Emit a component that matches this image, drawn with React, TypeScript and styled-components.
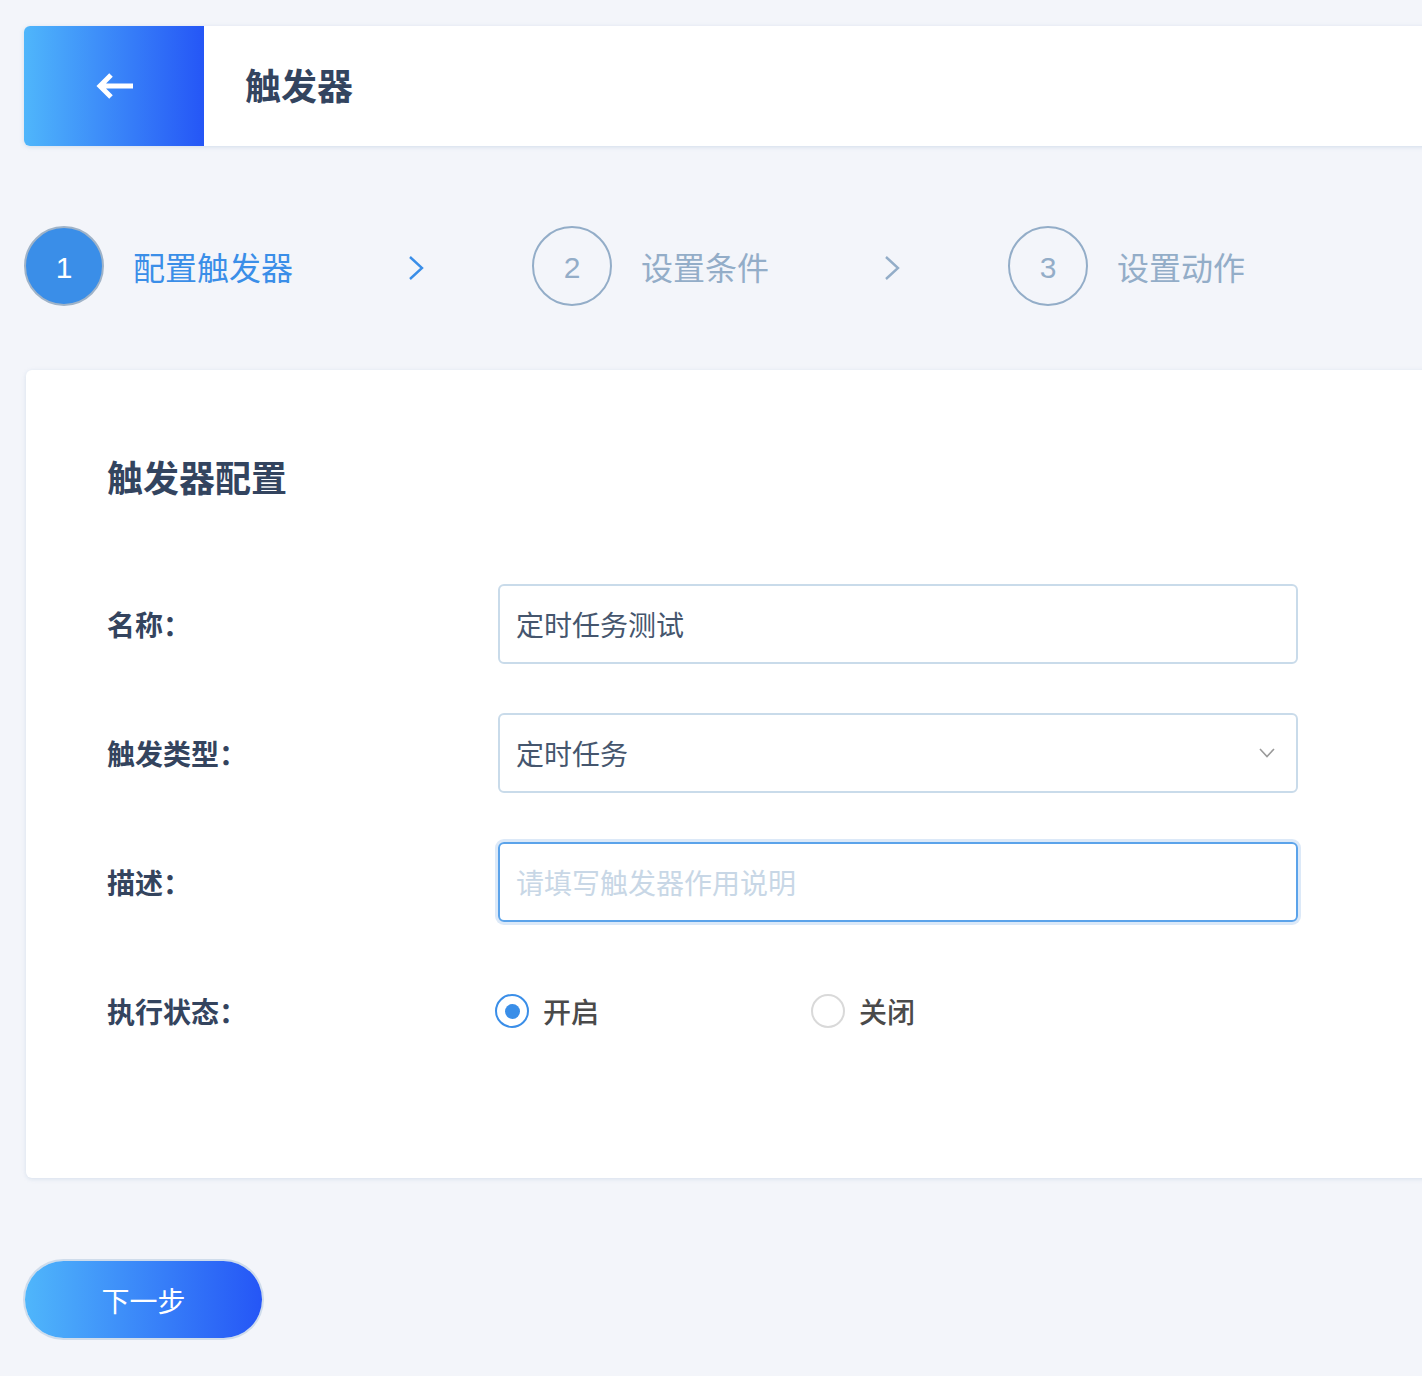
import styled, {createGlobalStyle} from "styled-components";

const GlobalStyle = createGlobalStyle`
  html, body {
    margin: 0;
    padding: 0;
    background: #f3f5fa;
    overflow-x: hidden;
  }
  body {
    font-family: "Liberation Sans", "Noto Sans CJK SC", sans-serif;
  }
`;

const Page = styled.div`
  width: 1460px;
  padding: 26px 0 38px 24px;
  box-sizing: border-box;
`;

const Header = styled.div`
  display: flex;
  height: 120px;
  background: #ffffff;
  border-radius: 6px 0 0 6px;
  box-shadow: 0 1px 4px rgba(150, 175, 205, 0.35);
`;

const BackButton = styled.div`
  width: 180px;
  display: flex;
  align-items: center;
  justify-content: center;
  border-radius: 6px 0 0 6px;
  background: linear-gradient(90deg, #4fb6fb 0%, #2556f6 100%);
`;

const HeaderTitle = styled.h1`
  margin: 0 0 0 41px;
  align-self: center;
  font-size: 36px;
  font-weight: 700;
  color: #33445f;
  line-height: 1;
  padding-top: 4px;
`;

const Steps = styled.div`
  display: flex;
  align-items: center;
  margin-top: 80px;
  height: 80px;
`;

const StepCircle = styled.div<{ $active?: boolean }>`
  width: 80px;
  height: 80px;
  box-sizing: border-box;
  border-radius: 50%;
  border: 2px solid ${p => p.$active ? "#9fb3c8" : "#93adc8"};
  background: ${p => p.$active ? "#3a8ee8" : "transparent"};
  color: ${p => p.$active ? "#ffffff" : "#93adc8"};
  display: flex;
  align-items: center;
  justify-content: center;
  font-size: 30px;
  font-weight: 300;
  padding-top: 3px;
  flex-shrink: 0;
`;

const StepLabel = styled.div<{ $active?: boolean }>`
  margin-left: 29px;
  font-size: 32px;
  color: ${p => p.$active ? "#3a8ee8" : "#93adc8"};
  line-height: 1;
  padding-top: 6px;
`;

const StepArrow = styled.div`
  display: flex;
  margin: 4px 107px 0 114px;
`;

const Card = styled.div`
  margin-top: 64px;
  margin-left: 2px;
  background: #ffffff;
  border-radius: 6px 0 0 6px;
  box-shadow: 0 1px 4px rgba(150, 175, 205, 0.3);
  padding: 92px 0 127px 81px;
`;

const CardTitle = styled.h2`
  margin: 0 0 86px 0;
  font-size: 36px;
  font-weight: 700;
  color: #33445f;
  line-height: 36px;
`;

const FormRow = styled.div`
  display: flex;
  align-items: center;
  height: 80px;
  margin-bottom: 49px;
  &:last-child {
    margin-bottom: 0;
  }
`;

const Label = styled.div`
  width: 391px;
  font-size: 28px;
  font-weight: 700;
  color: #34445e;
  flex-shrink: 0;
`;

const Field = styled.div<{ $focused?: boolean }>`
  width: 800px;
  height: 80px;
  box-sizing: border-box;
  border: 2px solid ${p => p.$focused ? "#5ba3ea" : "#c9dbea"};
  border-radius: 6px;
  box-shadow: ${p => p.$focused ? "0 0 0 3px #dce9f8" : "none"};
  display: flex;
  align-items: center;
  justify-content: space-between;
  padding: 0 20px 0 16px;
`;

const FieldText = styled.span<{ $placeholder?: boolean }>`
  font-size: 28px;
  color: ${p => p.$placeholder ? "#c8d7e6" : "#45566e"};
`;

const RadioGroup = styled.div`
  display: flex;
  margin-left: -3px;
`;

const RadioOption = styled.label`
  width: 316px;
  display: flex;
  align-items: center;
  gap: 14px;
  font-size: 28px;
  font-weight: 500;
  color: #4a4a4a;
`;

const RadioCircle = styled.span<{ $checked?: boolean }>`
  width: 34px;
  height: 34px;
  box-sizing: border-box;
  border-radius: 50%;
  border: 2px solid ${p => p.$checked ? "#3a8ee8" : "#d9d9d9"};
  display: flex;
  align-items: center;
  justify-content: center;
  &::after {
    content: "";
    display: ${p => p.$checked ? "block" : "none"};
    width: 15px;
    height: 15px;
    border-radius: 50%;
    background: #3a8ee8;
  }
`;

const NextButton = styled.button`
  margin-top: 83px;
  margin-left: 1px;
  width: 237px;
  height: 77px;
  border-radius: 39px;
  border: none;
  box-shadow: 0 0 0 2px #cfdceb;
  background: linear-gradient(90deg, #4fb6fb 0%, #2556f6 100%);
  color: #ffffff;
  font-family: "Liberation Sans", "Noto Sans CJK SC", sans-serif;
  font-size: 28px;
  cursor: pointer;
`;

function Chevron({color}: { color: string }) {
    return (
        <svg width="18" height="28" viewBox="0 0 18 28">
            <path d="M3 3 L15 14 L3 25" fill="none" stroke={color} strokeWidth="2.4"/>
        </svg>
    );
}

const steps = [
    {n: 1, label: "配置触发器", active: true},
    {n: 2, label: "设置条件", active: false},
    {n: 3, label: "设置动作", active: false},
];

export default function App() {
    return (
        <Page>
            <GlobalStyle/>
            <Header>
                <BackButton>
                    <svg width="40" height="28" viewBox="0 0 40 28">
                        <path d="M39 14 H6 M17 3 L6 14 L17 25" fill="none" stroke="#ffffff" strokeWidth="5"/>
                    </svg>
                </BackButton>
                <HeaderTitle>触发器</HeaderTitle>
            </Header>

            <Steps>
                {steps.map((s, i) => (
                    <div key={s.n} style={{display: "contents"}}>
                        <StepCircle $active={s.active}>{s.n}</StepCircle>
                        <StepLabel $active={s.active}>{s.label}</StepLabel>
                        {i < steps.length - 1 && (
                            <StepArrow>
                                <Chevron color={s.active ? "#3a8ee8" : "#93adc8"}/>
                            </StepArrow>
                        )}
                    </div>
                ))}
            </Steps>

            <Card>
                <CardTitle>触发器配置</CardTitle>

                <FormRow>
                    <Label>名称：</Label>
                    <Field><FieldText>定时任务测试</FieldText></Field>
                </FormRow>

                <FormRow>
                    <Label>触发类型：</Label>
                    <Field>
                        <FieldText>定时任务</FieldText>
                        <svg width="18" height="12" viewBox="0 0 18 12">
                            <path d="M2 2 L9 9.5 L16 2" fill="none" stroke="#9a9a9a" strokeWidth="1.6"/>
                        </svg>
                    </Field>
                </FormRow>

                <FormRow>
                    <Label>描述：</Label>
                    <Field $focused><FieldText $placeholder>请填写触发器作用说明</FieldText></Field>
                </FormRow>

                <FormRow>
                    <Label>执行状态：</Label>
                    <RadioGroup>
                        <RadioOption><RadioCircle $checked/>开启</RadioOption>
                        <RadioOption><RadioCircle/>关闭</RadioOption>
                    </RadioGroup>
                </FormRow>
            </Card>

            <NextButton>下一步</NextButton>
        </Page>
    );
}
